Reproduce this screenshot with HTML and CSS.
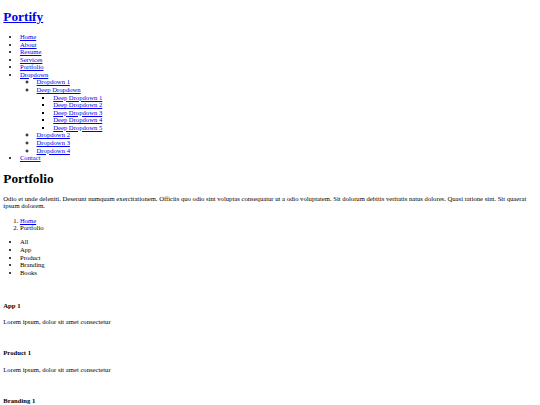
FILE: index.html
```html
<!DOCTYPE html>
<html lang="en">
<head>
<meta charset="utf-8">
<title>Portfolio - Portify</title>
<link rel="stylesheet" href="styles.css">
</head>
<body class="page">
<header class="site-header">
  <h1 class="logo"><a href="#">Portify</a></h1>
  <nav class="navbar">
    <ul class="menu">
      <li><a href="#">Home</a></li>
      <li><a href="#">About</a></li>
      <li><a href="#">Resume</a></li>
      <li><a href="#">Services</a></li>
      <li><a href="#">Portfolio</a></li>
      <li><a href="#">Dropdown</a>
        <ul class="menu">
          <li><a href="#">Dropdown 1</a></li>
          <li><a href="#">Deep Dropdown</a>
            <ul class="menu">
              <li><a href="#">Deep Dropdown 1</a></li>
              <li><a href="#">Deep Dropdown 2</a></li>
              <li><a href="#">Deep Dropdown 3</a></li>
              <li><a href="#">Deep Dropdown 4</a></li>
              <li><a href="#">Deep Dropdown 5</a></li>
            </ul>
          </li>
          <li><a href="#">Dropdown 2</a></li>
          <li><a href="#">Dropdown 3</a></li>
          <li><a href="#">Dropdown 4</a></li>
        </ul>
      </li>
      <li><a href="#">Contact</a></li>
    </ul>
  </nav>
</header>
<main class="main">
  <div class="page-title">
    <h1 class="title">Portfolio</h1>
    <p class="lead">Odio et unde deleniti. Deserunt numquam exercitationem. Officiis quo odio sint voluptas consequatur ut a odio voluptatem. Sit dolorum debitis veritatis natus dolores. Quasi ratione sint. Sit quaerat ipsum dolorem.</p>
    <ol class="breadcrumbs">
      <li><a href="#">Home</a></li>
      <li>Portfolio</li>
    </ol>
  </div>
  <section class="portfolio">
    <ul class="filters">
      <li>All</li>
      <li>App</li>
      <li>Product</li>
      <li>Branding</li>
      <li>Books</li>
    </ul>
    <div class="items">
      <div class="item">
        <div class="thumb"></div>
        <div class="info">
          <h4 class="item-title">App 1</h4>
          <p class="item-text">Lorem ipsum, dolor sit amet consectetur</p>
        </div>
      </div>
      <div class="item">
        <div class="thumb"></div>
        <div class="info">
          <h4 class="item-title">Product 1</h4>
          <p class="item-text">Lorem ipsum, dolor sit amet consectetur</p>
        </div>
      </div>
      <div class="item">
        <div class="thumb"></div>
        <div class="info">
          <h4 class="item-title">Branding 1</h4>
          <p class="item-text">Lorem ipsum, dolor sit amet consectetur</p>
        </div>
      </div>
    </div>
  </section>
</main>
</body>
</html>
```

FILE: styles.css
```css
html {
  font-size: 6.65px;
}
.page {
  margin: 0.5em;
  font-family: "Liberation Serif", "Times New Roman", serif;
  font-size: 1rem;
  line-height: 1.14;
  color: #000;
  background: #fff;
}
a {
  color: #0000ee;
}
.menu, .filters, .breadcrumbs {
  padding-left: 2.5em;
}
.logo, .title {
  font-size: 2em;
  margin: 0.67em 0;
}
.logo {
  margin-top: 0.42em;
}
.items {
  padding-top: 2px;
}
.thumb {
  height: 8px;
}
.item-title {
  font-size: 1em;
  margin: 1.33em 0;
}
```
